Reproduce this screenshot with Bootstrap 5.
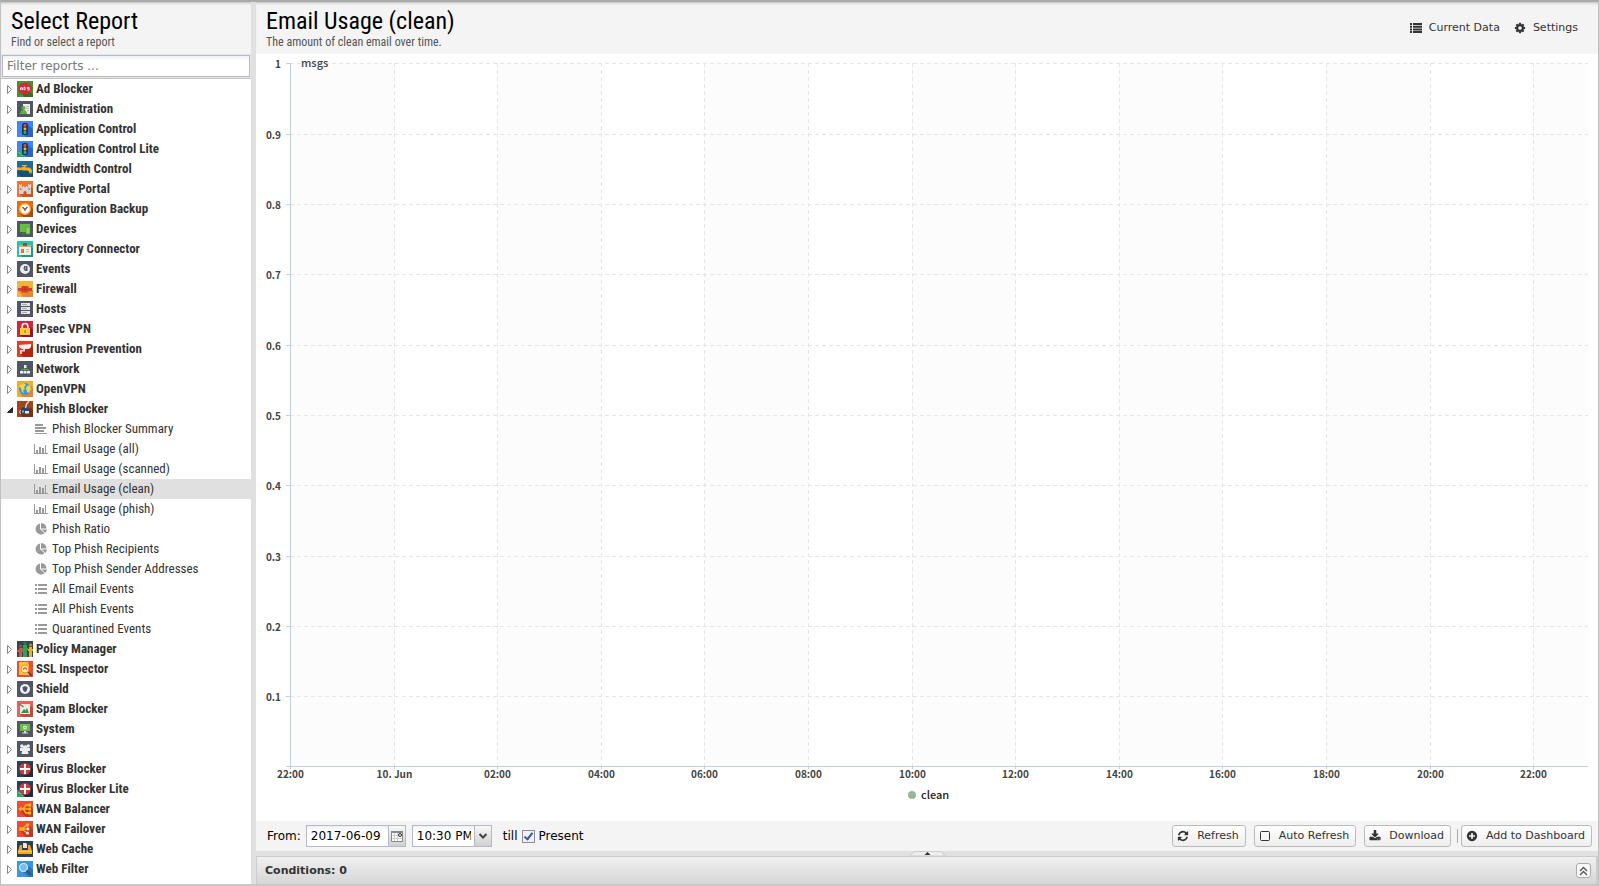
<!DOCTYPE html>
<html lang="en">
<head>
<meta charset="utf-8">
<meta name="viewport" content="width=device-width, initial-scale=1">
<title>Reports - Email Usage (clean)</title>
<link href="https://cdn.jsdelivr.net/npm/bootstrap@5.3.0/dist/css/bootstrap.min.css" rel="stylesheet">
<style>
  body { font-family: "DejaVu Sans", sans-serif; font-size: 12px; line-height: 16px; color: #333; background: #e0e0e0; }
  .app { border: 1px solid #c0c0c0; border-top: 2px solid #aaa; border-bottom: 2px solid #c8c8c8; }
  .side { width: 250px; }
  .pane-head { height: 52px; padding: 5px 20px 0 10px; background: #f4f4f4; box-shadow: inset 0 3px 3px -2px #bbb; font-family: "Roboto Condensed", Roboto, sans-serif; }
  .pane-head h1 { font-size: 24px; line-height: 28px; font-weight: 400; color: #000; }
  .pane-head p { font-size: 12px; line-height: 14px; color: #555; }
  .filter-bar { background: #e8e8e8; border-bottom: 1px solid #c0c0c0; padding: 1px; }
  .field, .filter-bar .form-control { height: 22px; border: 1px solid #b5b8c8; border-radius: 0; background: #fff linear-gradient(#eef2f4, #fff 5px); color: #000; }
  .filter-bar .form-control { padding: 0 4px; font-size: 12px; }
  .filter-bar .form-control::placeholder { color: #777; }

  .tree { font-family: "Roboto Condensed", Roboto, sans-serif; font-size: 13px; line-height: 20px; }
  .tree a { display: flex; align-items: center; height: 20px; color: #333; text-decoration: none; white-space: nowrap; }
  .tree > li > a { font-weight: 700; padding-left: 4px; }
  .tree .twist { width: 9px; height: 11px; margin-right: 3px; }
  .tree .app-icon { width: 16px; height: 16px; margin-right: 3px; }
  .tree ul a { padding-left: 32px; }
  .tree ul svg { width: 16px; height: 14px; margin-right: 3px; fill: #999; }
  .tree .active { background: #e0e0e0; }

  .main { margin-left: 5px; }
  .head-links { gap: 14px; padding-bottom: 5px; }
  .head-link { color: #333; font-size: 11px; gap: 7px; text-decoration: none; font-family: "DejaVu Sans", sans-serif; }
  .chart-box { min-height: 200px; }
  .chart-box text { font-family: "Noto Sans CJK JP", "Noto Sans", sans-serif; font-size: 10px; font-weight: 700; fill: #444; }
  .chart-box .unit { font-size: 11px; font-weight: 500; }
  .chart-box .legend-text { font-size: 11px; font-weight: 500; fill: #222; }

  .tools { height: 30px; background: #f4f4f4; color: #000; padding: 0 6px 0 11px; }
  .tools .field input { width: 100%; min-width: 0; border: 0; outline: 0; background: none; padding: 0 3px 0 4px; color: #000; font-size: 12px; }
  .tools label { font-size: 12px; }
  .date-field { width: 100px; margin-left: 5px; }
  .time-field { width: 80px; margin: 0 11px 0 6px; }
  .trigger { width: 17px; border: 0; border-left: 1px solid #b5b8c8; background: linear-gradient(#f8f8f8, #d0d0d0); padding: 0; }
  .tick { appearance: none; width: 13px; height: 13px; border: 1px solid #8a8f99; background: #eef0f4; margin: 0 4px; position: relative; }
  .tick:checked::after { content: ""; position: absolute; left: 3px; top: 0; width: 5px; height: 9px; border: solid #3a56a0; border-width: 0 2px 2px 0; transform: rotate(38deg); }
  .tool-btn { height: 22px; padding: 0 6px 0 4px; border: 1px solid #bbb; border-radius: 3px; background: linear-gradient(#fff, #eee); color: #333; font-size: 11px; line-height: 18px; display: flex; align-items: center; gap: 8px; white-space: nowrap; }
  .tool-btn svg { width: 12px; height: 12px; fill: #333; }
  .tool-sep { width: 1px; height: 14px; background: #b5a98c; margin: 0 3px 0 6px; }
  .splitter { height: 5px; background: #e0e0e0; }
  .conditions { height: 28px; border: 1px solid #ccc; border-width: 1px 2px 0 1px; background: linear-gradient(#f0f0f0, #d6d6d6); padding: 0 5px 0 8px; font-size: 11px; font-weight: 700; }
  .expand { width: 15px; height: 15px; border: 1px solid #aaa; border-radius: 3px; background: #f8f8f8; }
</style>
</head>
<body>
<svg class="d-none" xmlns="http://www.w3.org/2000/svg">
  <symbol id="closed" viewBox="0 0 9 11"><path d="M2.500 1.500v8l4-4z" fill="#fff" stroke="#888"/></symbol>
  <symbol id="open" viewBox="0 0 9 11"><path d="M7.500 3.500v5h-5z" fill="#333" stroke="#222"/></symbol>
  <symbol id="text" viewBox="0 0 16 14"><path d="M2 2h8v2H2zM2 5h11v2H2zM2 8h9v2H2zM2 11h12v1H2z"/></symbol>
  <symbol id="bars" viewBox="0 0 16 14"><path d="M1 2h1v9h13v1H1zM3 8h2v3H3zM6 5h2v6H6zM9 6h2v5H9zM12 3h1v8h-1z"/></symbol>
  <symbol id="pie" viewBox="0 0 16 14"><path d="M7 1.500V7l4.500 4.200A5.500 5.500 0 1 1 7 1.500zM8 1a5.500 5.500 0 0 1 5.500 5.500H8zM8.500 7.500h5.500a5 5 0 0 1-1.600 3.400z"/></symbol>
  <symbol id="rows" viewBox="0 0 16 14"><path d="M2 2h2v2H2zM5 2h9v2H5zM2 6h2v2H2zM5 6h9v2H5zM2 10h2v2H2zM5 10h9v2H5z"/></symbol>

  <symbol id="ad" viewBox="0 0 16 16"><path fill="#4d8f2d" d="M0 0h16v16H0z"/><path fill="#3a6c22" d="M13 11l3 3v2H8l-3-3z"/><path fill="#d02a3c" d="M5 2h6l3.500 3.500v4L11 13H5L1.500 9.500v-4z"/><path d="M3.500 9V7l1-1 1 1v2M3.500 8h2M7 6.200v2.600h1q1-1.200 0-2.600zM12.500 6.400h-2v1.200h1.800V9h-2" fill="none" stroke="#fff" stroke-width=".8"/></symbol>
  <symbol id="admin" viewBox="0 0 16 16"><path fill="#505666" d="M0 0h16v16H0z"/><path fill="#eee" d="M6 3h7v10H6z"/><path stroke="#bbb" d="M9 5.500h3M9 7.500h3M10 9.500h2"/><circle cx="6.500" cy="7" r="2" fill="#5fae43"/><path fill="#5fae43" d="M3 13q0-4 3.500-4t3.500 4z"/></symbol>
  <symbol id="appc" viewBox="0 0 16 16"><path fill="#3f86f5" d="M0 0h16v16H0z"/><path fill="#2c63c9" d="M10 3l6 5v8H9l-3-3z"/><rect x="5" y="2" width="6" height="12" rx="2" fill="#283747"/><circle cx="8" cy="4.500" r="1.400" fill="#e84c3d"/><circle cx="8" cy="8" r="1.400" fill="#f5b921"/><circle cx="8" cy="11.500" r="1.400" fill="#2fb769"/></symbol>
  <symbol id="lite" viewBox="0 0 16 16"><path fill="#27a567" d="M0 8l8 8H0z"/><path d="M1.500 11l4 4" stroke="#b7ebd0" stroke-dasharray="1 1"/></symbol>
  <symbol id="tap" viewBox="0 0 16 16"><path fill="#1f6a9a" d="M0 0h16v16H0z"/><path fill="#174f76" d="M10 8l6 5v3H4L0 11z"/><path fill="#f6ad1c" d="M5 4h5v1H8.500v1.500H11q4 0 4 4.500h-3q0-1.500-2-1.500H6L5 9H0V6.500h4L6.500 6V5H5z"/><path fill="#d98a0c" d="M12 11h3v1.500h-3z"/></symbol>
  <symbol id="castle" viewBox="0 0 16 16"><path fill="#f7702f" d="M0 0h16v16H0z"/><path fill="#cf551b" d="M14 6l2 2v8H6l-3-3z"/><path fill="#d8d2cd" d="M2 3h1v1h1V3h1v3h1V5h1v1h2V5h1v1h1V3h1v1h1V3h1v10H9.500v-2q-1.500-2-3 0v2H2z"/><path fill="#9b928c" d="M3 7h1.500v2H3zM11.500 7H13v2h-1.500z"/></symbol>
  <symbol id="clock" viewBox="0 0 16 16"><path fill="#e56b0b" d="M0 0h16v16H0z"/><path fill="#a94a08" d="M13 5l3 3v8H7l-4-3z"/><circle cx="8" cy="8" r="5.300" fill="#fff" stroke="#f8ad4b" stroke-width="1.400"/><path d="M5.500 6L8 8.500 10.500 6" fill="none" stroke="#555" stroke-width="1.300"/><circle cx="8" cy="9" r="1" fill="#e5472b"/></symbol>
  <symbol id="devices" viewBox="0 0 16 16"><path fill="#505666" d="M0 0h16v16H0z"/><path fill="#69bd45" d="M3 3h10v8H3z"/><path fill="#3f7c2b" d="M5 11h3v2H5z"/><path fill="#8cd66b" stroke="#4c9632" stroke-width=".7" d="M9 6h4v7H9z"/></symbol>
  <symbol id="directory" viewBox="0 0 16 16"><path fill="#24c6a4" d="M0 0h16v16H0z"/><path fill="#1a9c80" d="M14 5l2 2v9H5l-2-2z"/><path fill="#f5efe3" d="M2 4h12v10H2z"/><path fill="#e6a368" d="M2 4h12v2H2z"/><path fill="#59616a" d="M6 2h4v3H6z"/><path fill="#e96a3d" d="M4 8h3v4H4z"/><path stroke="#bbb" d="M9 8.500h3M9 10.500h3"/></symbol>
  <symbol id="events" viewBox="0 0 16 16"><path fill="#505666" d="M0 0h16v16H0z"/><circle cx="8" cy="8" r="5" fill="#eee"/><path fill="#505666" d="M7 5h3.500v5H8L6.500 8z"/><path fill="#a6aab3" d="M8 5.500h1v3H8z"/></symbol>
  <symbol id="firewall" viewBox="0 0 16 16"><path fill="#f4b13a" d="M0 0h16v16H0z"/><path fill="#e6872b" d="M15 8l1 1v7H6l-4-6z"/><path fill="#d5422b" d="M1 7h3l1-2h6l1 2h3v3h-3l-1 1.500H5L4 10H1z"/><path stroke="#a92d1c" d="M5 8.500h6M8 5.500v5" stroke-width=".6"/></symbol>
  <symbol id="hosts" viewBox="0 0 16 16"><path fill="#505666" d="M0 0h16v16H0z"/><path fill="#e6e6e6" d="M4 2h9v3H4zM4 6h9v3H4zM4 10h9v3H4z"/><path stroke="#a6abb5" d="M5 3.500h5M5 7.500h5M5 11.500h5"/></symbol>
  <symbol id="lock" viewBox="0 0 16 16"><path fill="#d42440" d="M0 0h16v16H0z"/><path fill="#981329" d="M13 6l3 3v7H6l-3-2z"/><path d="M5.200 8V5q0-2.500 2.800-2.500T10.800 5v3" fill="none" stroke="#eee" stroke-width="1.700"/><path fill="#f9ce37" d="M3 7h10v7H3z"/><path fill="#c58b13" d="M7.300 9h1.500v3H7.300z"/></symbol>
  <symbol id="camera" viewBox="0 0 16 16"><path fill="#e63c22" d="M0 0h16v16H0z"/><path fill="#b5230f" d="M14 5l2 2v9H6l-3-4z"/><path fill="#eee" d="M2 4l12-1v3l-2 2H5L2 6z"/><path fill="#d6d6d6" d="M6 8h2v2.500H5V13H3V9h3z"/></symbol>
  <symbol id="network" viewBox="0 0 16 16"><path fill="#505666" d="M0 0h16v16H0z"/><path d="M8 5v5M4.500 11V8.500h7V11" fill="none" stroke="#69bd45" stroke-width=".7"/><path fill="#eee" d="M7 4h2.500v3H7zM3 10h3v2.500H3zM6.500 10h3v2.500h-3zM10 10h3v2.500h-3z"/></symbol>
  <symbol id="globe" viewBox="0 0 16 16"><path fill="#f9ad18" d="M0 0h16v16H0z"/><path fill="#f07f2e" d="M13 4l3 3v9H6l-2-2z"/><circle cx="8" cy="8" r="6" fill="#2f9edb"/><path fill="#f8d24c" d="M3 4l4-2 2 2-2 2 1 2-2 1 1 3-2-1-1-4-2-1zM10 5l3-1 1 4-2 4-2-1-1-4z"/></symbol>
  <symbol id="phish" viewBox="0 0 16 16"><path fill="#a5431b" d="M0 0h16v16H0z"/><path fill="#7b2f11" d="M14 7l2 2v7H6l-3-3z"/><path fill="#26466a" d="M4 8l2-2h5l2 2v5H4z"/><path fill="#e8e4dc" d="M8 10h4v2.500H8z"/><path fill="#8da6bf" d="M5 9.500h2v2H5z"/><path d="M12 0L9.500 3 8.500 7" fill="none" stroke="#d7cfc8" stroke-width="1.500"/><path d="M3.500 9l-1 2 1.500 2" fill="none" stroke="#d7cfc8"/></symbol>
  <symbol id="policy" viewBox="0 0 16 16"><path fill="#36454f" d="M0 0h16v16H0z"/><path fill="#e34b3d" d="M2 7h3v9H2z"/><path fill="#29a35a" d="M6 4h4v12H6z"/><path fill="#f0af1f" d="M12 6h3v10h-3z"/><path fill="#e34b3d" d="M0 9h6v2H0z"/><path fill="#29a35a" d="M5 7h6v2H5z"/><path fill="#f0af1f" d="M11 8h5v2h-5z"/><circle cx="3.500" cy="5" r="1.500" fill="#c73a2f"/><circle cx="8" cy="2.500" r="1.500" fill="#208a49"/><circle cx="13.500" cy="4" r="1.500" fill="#cf8f12"/></symbol>
  <symbol id="ssl" viewBox="0 0 16 16"><path fill="#ee4b36" d="M0 0h16v16H0z"/><path fill="#f8c737" d="M2 1h9l1 3v10H2z"/><circle cx="8" cy="8" r="4" fill="#fce6b0" stroke="#f29323"/><path d="M11 11l4 4" stroke="#47423f" stroke-width="1.600"/><path fill="#ee713b" d="M6 7l2-1 2 1v2H9V8H7v1H6z"/></symbol>
  <symbol id="shield" viewBox="0 0 16 16"><path fill="#505666" d="M0 0h16v16H0z"/><circle cx="8" cy="8" r="5" fill="#f2f2f2"/><path fill="#505666" d="M5.500 6.200L8 5l2.500 1.200Q10.500 10 8 11 5.500 10 5.500 6.200z"/></symbol>
  <symbol id="spam" viewBox="0 0 16 16"><path fill="#e96158" d="M0 0h16v16H0z"/><path fill="#c24840" d="M14 5l2 2v9H6l-3-2z"/><path fill="#f0eadf" d="M3 3h10v10H3z"/><path fill="#3d9447" d="M4 12l3-4 1.500 1.500L10 7l2 5z"/><path d="M2.500 3l4 3" stroke="#6f7d55" stroke-width="1.500"/></symbol>
  <symbol id="system" viewBox="0 0 16 16"><path fill="#505666" d="M0 0h16v16H0z"/><path fill="#69bd45" d="M3 3h10v7H3z"/><circle cx="8" cy="6.500" r="2" fill="#d8f0cc"/><circle cx="8" cy="6.500" r=".8" fill="#69bd45"/><path fill="#ddd" d="M7 10h2v1.500h2v1H5v-1h2z"/></symbol>
  <symbol id="users" viewBox="0 0 16 16"><path fill="#505666" d="M0 0h16v16H0z"/><g fill="#eee"><circle cx="4.800" cy="5" r="1.700"/><circle cx="11.200" cy="5" r="1.700"/><circle cx="8" cy="6.500" r="2.200"/><path d="M3 7h10v3H3zM4.500 13q0-4 3.500-4t3.500 4z"/></g></symbol>
  <symbol id="virus" viewBox="0 0 16 16"><path fill="#26405e" d="M0 0h16v16H0z"/><path fill="#1a2c42" d="M13 5l3 3v8H8l-4-3z"/><circle cx="8" cy="8" r="6" fill="#d23b31"/><path fill="#fff" d="M7 3h2v4h4v2H9v4H7V9H3V7h4z"/></symbol>
  <symbol id="balancer" viewBox="0 0 16 16"><path fill="#ee4b36" d="M0 0h16v16H0z"/><path fill="#c63625" d="M13 5l3 3v8H9l-6-6z"/><path d="M3 8h9M12 4H9L6 8l3 4h3" fill="none" stroke="#fbb521" stroke-width="1.400"/><path fill="#fbb521" d="M4.500 5.500v5L1 8zM11.500 2.500h2.500v3h-2.500zM11.500 6.500h2.500v3h-2.500zM11.500 10.500h2.500v3h-2.500z"/></symbol>
  <symbol id="failover" viewBox="0 0 16 16"><path fill="#ee4b36" d="M0 0h16v16H0z"/><path fill="#c63625" d="M13 5l3 3v8H9l-6-6z"/><path d="M5 8l5-4M5 8h6M5 8l5 4" stroke="#fbb521" stroke-width="1.400"/><circle cx="4" cy="8" r="2" fill="#fbb521"/><circle cx="10.500" cy="4" r="1.700" fill="#fbb521"/><circle cx="11" cy="8" r="1.400" fill="#fff"/><circle cx="10.500" cy="12" r="1.600" fill="#f6d9d4"/></symbol>
  <symbol id="cache" viewBox="0 0 16 16"><path fill="#26405e" d="M0 0h16v16H0z"/><path fill="#f5a81c" d="M3 4h2v5h6V4h2l2 6v3H1v-3z"/><path fill="#f6e9c4" d="M6 2h3l1 1v4H6z"/><path fill="#fff" d="M1 10h14v1H1z" opacity=".4"/><path fill="#26405e" d="M5 8h6v1H5z"/></symbol>
  <symbol id="webfilter" viewBox="0 0 16 16"><path fill="#3796dc" d="M0 0h16v16H0z"/><path fill="#2876b4" d="M12 5l4 4v7h-4l-6-5z"/><circle cx="6.500" cy="6.500" r="4" fill="#73bdf0" stroke="#d7e9f6" stroke-width="1.200"/><path d="M9.500 9.500l4 4" stroke="#33506b" stroke-width="1.800"/></symbol>

  <symbol id="list" viewBox="0 0 12 10"><path d="M0 0h2v2H0zM3 0h9v2H3zM0 2.700h2v2H0zM3 2.700h9v2H3zM0 5.400h2v2H0zM3 5.400h9v2H3zM0 8.100h2v2H0zM3 8.100h9v2H3z"/></symbol>
  <symbol id="cog" viewBox="0 0 1792 1792"><path d="M1152 896q0-106-75-181t-181-75-181 75-75 181 75 181 181 75 181-75 75-181zm512-109v222q0 12-8 23t-20 13l-185 28q-19 54-39 91 35 50 107 138 10 12 10 25t-9 23q-27 37-99 108t-94 71q-12 0-26-9l-138-108q-44 23-91 38-16 136-29 186-7 28-36 28h-222q-14 0-24.500-8.500t-11.500-21.500l-28-184q-49-16-90-37l-141 107q-10 9-25 9-14 0-25-11-126-114-165-168-7-10-7-23 0-12 8-23 15-21 51-66.500t54-70.500q-27-50-41-99l-183-27q-13-2-21-12.500t-8-23.500v-222q0-12 8-23t19-13l186-28q14-46 39-92-40-57-107-138-10-12-10-24 0-10 9-23 26-36 98.500-107.500t94.500-71.500q13 0 26 10l138 107q44-23 91-38 16-136 29-186 7-28 36-28h222q14 0 24.500 8.500t11.500 21.500l28 184q49 16 90 37l142-107q9-9 24-9 13 0 25 10 129 119 165 170 7 8 7 22 0 12-8 23-15 21-51 66.500t-54 70.500q26 50 41 98l183 28q13 2 21 12.500t8 23.500z"/></symbol>
  <symbol id="refresh" viewBox="0 0 1792 1792"><path d="M1639 1056q0 5-1 7-64 268-268 434.500t-478 166.500q-146 0-282.500-55t-243.500-157l-129 129q-19 19-45 19t-45-19-19-45v-448q0-26 19-45t45-19h448q26 0 45 19t19 45-19 45l-137 137q71 66 161 102t187 36q134 0 250-65t186-179q11-17 53-117 8-23 30-23h192q13 0 22.500 9.500t9.500 22.500zm25-800v448q0 26-19 45t-45 19h-448q-26 0-45-19t-19-45 19-45l138-138q-148-137-349-137-134 0-250 65t-186 179q-11 17-53 117-8 23-30 23h-199q-13 0-22.500-9.500t-9.500-22.500v-7q65-268 270-434.500t480-166.500q146 0 284 55.500t245 156.500l130-129q19-19 45-19t45 19 19 45z"/></symbol>
  <symbol id="download" viewBox="0 0 1792 1792"><path d="M1344 1344q0-26-19-45t-45-19-45 19-19 45 19 45 45 19 45-19 19-45zm256 0q0-26-19-45t-45-19-45 19-19 45 19 45 45 19 45-19 19-45zm128-224v320q0 40-28 68t-68 28h-1472q-40 0-68-28t-28-68v-320q0-40 28-68t68-28h465l135 136q58 56 136 56t136-56l136-136h464q40 0 68 28t28 68zm-325-569q17 41-14 70l-448 448q-18 19-45 19t-45-19l-448-448q-31-29-14-70 17-39 59-39h256v-448q0-26 19-45t45-19h256q26 0 45 19t19 45v448h256q42 0 59 39z"/></symbol>
  <symbol id="plus" viewBox="0 0 1792 1792"><path d="M1344 960v-128q0-26-19-45t-45-19h-256v-256q0-26-19-45t-45-19h-128q-26 0-45 19t-19 45v256h-256q-26 0-45 19t-19 45v128q0 26 19 45t45 19h256v256q0 26 19 45t45 19h128q26 0 45-19t19-45v-256h256q26 0 45-19t19-45zm320-64q0 209-103 385.500t-279.500 279.500-385.500 103-385.500-103-279.500-279.500-103-385.500 103-385.500 279.500-279.500 385.500-103 385.500 103 279.500 279.500 103 385.500z"/></symbol>
</svg>

<div class="app d-flex vh-100 overflow-hidden">
  <aside class="side d-flex flex-column flex-shrink-0 bg-white">
    <header class="pane-head flex-shrink-0">
      <h1 class="m-0">Select Report</h1>
      <p class="m-0">Find or select a report</p>
    </header>
    <div class="filter-bar"><input class="form-control" type="text" placeholder="Filter reports ..." aria-label="Filter reports"></div>
    <nav class="flex-grow-1 overflow-hidden" aria-label="Reports">
      <ul class="tree list-unstyled m-0" id="tree"></ul>
    </nav>
  </aside>

  <main class="main d-flex flex-column flex-grow-1 bg-white">
    <header class="pane-head flex-shrink-0 d-flex justify-content-between">
      <div><h1 class="m-0">Email Usage (clean)</h1><p class="m-0">The amount of clean email over time.</p></div>
      <div class="head-links d-flex align-items-center">
        <a class="head-link d-flex align-items-center" href="#"><svg width="12" height="10" fill="#333"><use href="#list"/></svg>Current Data</a>
        <a class="head-link d-flex align-items-center" href="#"><svg width="12" height="12" fill="#333" fill-rule="evenodd"><use href="#cog"/></svg>Settings</a>
      </div>
    </header>

    <div class="chart-box flex-grow-1 overflow-hidden position-relative">
      <svg id="chart" class="position-absolute w-100 h-100" role="img" aria-label="Clean messages over time"></svg>
    </div>

    <div class="tools d-flex align-items-center justify-content-between flex-shrink-0">
      <div class="d-flex align-items-center">
        <label for="fromDate">From:</label>
        <div class="field date-field d-flex">
          <input id="fromDate" type="text" value="2017-06-09">
          <button class="trigger flex-shrink-0" type="button" aria-label="Pick a date"><svg class="d-block mx-auto" width="14" height="14"><path d="M1.500 2.500h11v10h-11z" fill="#fff" stroke="#888"/><path d="M1 2h12v2H1z" fill="#888"/><path d="M4.500 4v8M7.500 4v8M2 6.500h10M2 9.500h10" stroke="#ccc"/><circle cx="10" cy="6" r="1.500" fill="#fff" stroke="#222"/></svg></button>
        </div>
        <div class="field time-field d-flex">
          <input type="text" value="10:30 PM" aria-label="From time">
          <button class="trigger flex-shrink-0" type="button" aria-label="Pick a time"><svg class="d-block mx-auto" width="10" height="8"><path d="M1.500 2L5 5.500 8.500 2" fill="none" stroke="#444" stroke-width="2"/></svg></button>
        </div>
        <span>till</span>
        <input class="tick" type="checkbox" id="present" checked><label for="present">Present</label>
      </div>
      <div class="d-flex align-items-center">
        <button class="tool-btn me-2" type="button"><svg><use href="#refresh"/></svg>Refresh</button>
        <button class="tool-btn me-2" type="button"><svg viewBox="0 0 12 12"><rect x="1.500" y="1.500" width="9" height="9" rx="1" fill="none" stroke="#333"/></svg>Auto Refresh</button>
        <button class="tool-btn" type="button"><svg><use href="#download"/></svg>Download</button>
        <span class="tool-sep"></span>
        <button class="tool-btn" type="button"><svg><use href="#plus"/></svg>Add to Dashboard</button>
      </div>
    </div>
    <div class="splitter flex-shrink-0 d-flex justify-content-center">
      <svg width="35" height="5"><path d="M0 5l4-4.500h27L35 5z" fill="#eee" stroke="#ccc"/><path d="M17.500 1l3 3h-6z" fill="#333"/></svg>
    </div>
    <div class="conditions flex-shrink-0 d-flex align-items-center justify-content-between">
      <span>Conditions: 0</span>
      <button class="expand p-0 d-flex align-items-center justify-content-center" type="button" aria-label="Expand conditions"><svg width="9" height="10" fill="none" stroke="#555"><path d="M1 5l3.500-3.500L8 5M1 9l3.500-3.500L8 9" stroke-width="1.400"/></svg></button>
    </div>
  </main>
</div>

<script src="https://cdn.jsdelivr.net/npm/bootstrap@5.3.0/dist/js/bootstrap.bundle.min.js"></script>
<script>
  const reports = [
    ['text', 'Phish Blocker Summary'], ['bars', 'Email Usage (all)'], ['bars', 'Email Usage (scanned)'],
    ['bars', 'Email Usage (clean)'], ['bars', 'Email Usage (phish)'], ['pie', 'Phish Ratio'],
    ['pie', 'Top Phish Recipients'], ['pie', 'Top Phish Sender Addresses'],
    ['rows', 'All Email Events'], ['rows', 'All Phish Events'], ['rows', 'Quarantined Events']
  ];
  const categories = [
    ['ad', 'Ad Blocker'], ['admin', 'Administration'], ['appc', 'Application Control'], ['appc', 'Application Control Lite'],
    ['tap', 'Bandwidth Control'], ['castle', 'Captive Portal'], ['clock', 'Configuration Backup'], ['devices', 'Devices'],
    ['directory', 'Directory Connector'], ['events', 'Events'], ['firewall', 'Firewall'], ['hosts', 'Hosts'],
    ['lock', 'IPsec VPN'], ['camera', 'Intrusion Prevention'], ['network', 'Network'], ['globe', 'OpenVPN'],
    ['phish', 'Phish Blocker', reports], ['policy', 'Policy Manager'], ['ssl', 'SSL Inspector'], ['shield', 'Shield'],
    ['spam', 'Spam Blocker'], ['system', 'System'], ['users', 'Users'], ['virus', 'Virus Blocker'],
    ['virus', 'Virus Blocker Lite'], ['balancer', 'WAN Balancer'], ['failover', 'WAN Failover'],
    ['cache', 'Web Cache'], ['webfilter', 'Web Filter']
  ];
  const use = id => `<use href="#${id}"/>`;
  document.getElementById('tree').innerHTML = categories.map(([icon, name, items]) =>
    `<li><a href="#"><svg class="twist">${use(items ? 'open' : 'closed')}</svg>` +
    `<svg class="app-icon">${use(icon)}${name.endsWith('Lite') ? use('lite') : ''}</svg>${name}</a>` +
    (items ? '<ul class="list-unstyled">' + items.map(([i, n]) =>
      `<li><a href="#"${n === 'Email Usage (clean)' ? ' class="active" aria-current="page"' : ''}><svg>${use(i)}</svg>${n}</a></li>`).join('') + '</ul>' : '') +
    '</li>').join('');

  // Time axis: a tick every two hours over a little more than a day
  const ticks = ['22:00', '10. Jun', '02:00', '04:00', '06:00', '08:00', '10:00', '12:00', '14:00', '16:00', '18:00', '20:00', '22:00'];
  const span = 12.53;
  const chart = document.getElementById('chart');
  function draw() {
    const w = chart.parentNode.clientWidth, h = chart.parentNode.clientHeight;
    const left = 34, right = w - 10, top = 9, bottom = h - 55;
    const step = (right - left) / span;
    let bands = '', lines = '', labels = '';
    ticks.forEach((t, i) => {
      const x = Math.round(left + i * step) + 0.5;
      if (i % 2 === 0) bands += `<rect x="${x}" y="${top}" width="${Math.min(step, right - x)}" height="${bottom - top}" fill="#fcfcfc"/>`;
      if (i) lines += `<path d="M${x} ${top}V${bottom}" stroke="#e6e6e6" stroke-dasharray="4 3"/>`;
      lines += `<path d="M${x} ${bottom}v3" stroke="#c0d0e0"/>`;
      labels += `<text x="${x}" y="${bottom + 12}" text-anchor="middle">${t}</text>`;
    });
    for (let i = 1; i <= 10; i++) {
      const y = Math.ceil(bottom - (bottom - top) * i / 10) + 0.5;
      lines += `<path d="M${left} ${y}H${right}" stroke="#e6e6e6" stroke-dasharray="4 3"/><path d="M${left - 4} ${y}h4" stroke="#c0d0e0"/>`;
      labels += `<text x="25" y="${y + 4}" text-anchor="end">${i / 10}</text>`;
    }
    lines += `<path d="M${left + 0.5} ${top}V${bottom}M${left - 4} ${bottom + 0.5}H${right}" stroke="#c0d0e0" fill="none"/>`;
    const mid = Math.round(w / 2);
    chart.innerHTML = bands + lines + labels +
      `<text class="unit" x="45" y="13">msgs</text>` +
      `<circle cx="${mid - 15}" cy="${bottom + 29}" r="4" fill="#9bb694"/>` +
      `<text class="legend-text" x="${mid - 6}" y="${bottom + 33}">clean</text>`;
  }
  draw();
  addEventListener('resize', draw);
</script>
</body>
</html>
